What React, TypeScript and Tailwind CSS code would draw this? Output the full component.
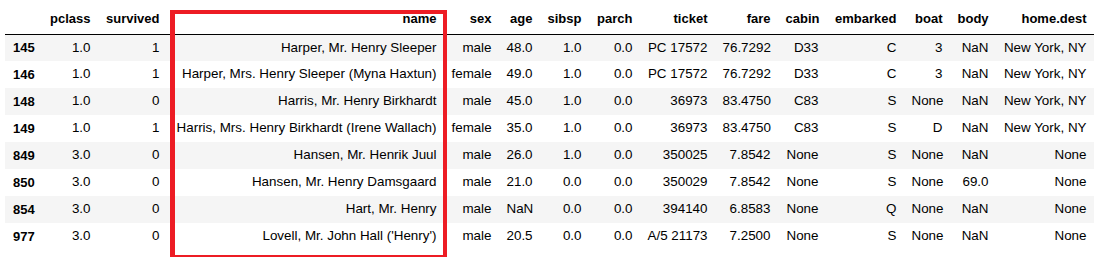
const columns = [
  { key: "pclass", width: "w-[56px]" },
  { key: "survived", width: "w-[69px]" },
  { key: "name", width: "w-[277px]" },
  { key: "sex", width: "w-[55px]" },
  { key: "age", width: "w-[41px]" },
  { key: "sibsp", width: "w-[49px]" },
  { key: "parch", width: "w-[51px]" },
  { key: "ticket", width: "w-[75px]" },
  { key: "fare", width: "w-[63px]" },
  { key: "cabin", width: "w-[48px]" },
  { key: "embarked", width: "w-[78px]" },
  { key: "boat", width: "w-[46px]" },
  { key: "body", width: "w-[46px]" },
  { key: "home.dest", width: "w-[98px]" },
];

const rows: string[][] = [
  ["145", "1.0", "1", "Harper, Mr. Henry Sleeper", "male", "48.0", "1.0", "0.0", "PC 17572", "76.7292", "D33", "C", "3", "NaN", "New York, NY"],
  ["146", "1.0", "1", "Harper, Mrs. Henry Sleeper (Myna Haxtun)", "female", "49.0", "1.0", "0.0", "PC 17572", "76.7292", "D33", "C", "3", "NaN", "New York, NY"],
  ["148", "1.0", "0", "Harris, Mr. Henry Birkhardt", "male", "45.0", "1.0", "0.0", "36973", "83.4750", "C83", "S", "None", "NaN", "New York, NY"],
  ["149", "1.0", "1", "Harris, Mrs. Henry Birkhardt (Irene Wallach)", "female", "35.0", "1.0", "0.0", "36973", "83.4750", "C83", "S", "D", "NaN", "New York, NY"],
  ["849", "3.0", "0", "Hansen, Mr. Henrik Juul", "male", "26.0", "1.0", "0.0", "350025", "7.8542", "None", "S", "None", "NaN", "None"],
  ["850", "3.0", "0", "Hansen, Mr. Henry Damsgaard", "male", "21.0", "0.0", "0.0", "350029", "7.8542", "None", "S", "None", "69.0", "None"],
  ["854", "3.0", "0", "Hart, Mr. Henry", "male", "NaN", "0.0", "0.0", "394140", "6.8583", "None", "Q", "None", "NaN", "None"],
  ["977", "3.0", "0", "Lovell, Mr. John Hall ('Henry')", "male", "20.5", "0.0", "0.0", "A/5 21173", "7.2500", "None", "S", "None", "NaN", "None"],
];

export default function App() {
  return (
    <div className="relative w-[1103px] h-[257px] bg-white font-['Liberation_Sans',Arial,sans-serif] text-[13px] text-black">
      <table className="table-fixed border-collapse ml-[5px] mt-[7px] w-[1089px]">
        <colgroup>
          <col className="w-[37px]" />
          {columns.map((c) => (
            <col key={c.key} className={c.width} />
          ))}
        </colgroup>
        <thead className="border-b border-black">
          <tr className="h-[27px]">
            <th className="px-[7.5px]" />
            {columns.map((c) => (
              <th key={c.key} className="px-[7.5px] text-right align-bottom pb-[5px] font-bold whitespace-nowrap">
                {c.key}
              </th>
            ))}
          </tr>
        </thead>
        <tbody>
          {rows.map((row, i) => (
            <tr key={row[0]} className={i % 2 === 0 ? "h-[27px] bg-[#f5f5f5]" : "h-[27px] bg-white"}>
              <th className="pl-2 pr-[7.5px] text-left font-bold">{row[0]}</th>
              {row.slice(1).map((cell, j) => (
                <td key={j} className="px-[7.5px] text-right text-[13.4px] whitespace-nowrap">
                  {cell}
                </td>
              ))}
            </tr>
          ))}
        </tbody>
      </table>

      {/* highlight around the name column */}
      <div className="absolute left-[170px] top-[3px] w-[277px] h-[249px] border-4 border-l-[5px] border-[#ed1c24] pointer-events-none" />
    </div>
  );
}
